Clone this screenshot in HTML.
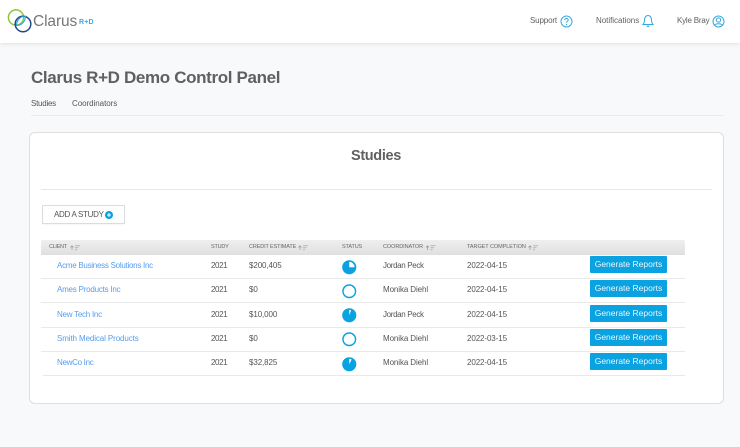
<!DOCTYPE html>
<html>
<head>
<meta charset="utf-8">
<style>
html,body{margin:0;padding:0}
body{width:740px;height:447px;overflow:hidden;background:#f8f9fb;position:relative;font-family:"Liberation Sans",sans-serif;color:#5c5c5c}
.a{position:absolute;white-space:nowrap}
.t{font-size:8px;line-height:12px;letter-spacing:-.1px;color:#555}
.y{letter-spacing:-.4px}
.jp{letter-spacing:-.35px}
.l{font-size:8px;line-height:12px;color:#569dee;left:57px}
.h{font-size:5.5px;line-height:10px;top:242px;color:#666;letter-spacing:-.1px}
.ln{position:absolute;left:41px;width:644px;height:1px;background:#e9e9e9}
.b{position:absolute;left:590px;width:77px;height:17px;background:#0aa2e0;color:#e8f7ff;font-size:8.5px;line-height:16px;text-align:center;border-radius:1px;letter-spacing:0}
svg{position:absolute;overflow:visible}
</style>
</head>
<body>
<div class="a" style="left:0;top:0;width:740px;height:43px;background:#fff;box-shadow:0 1px 4px rgba(0,0,0,.1)"></div>

<svg style="left:6px;top:8px" width="27" height="26" viewBox="0 0 27 26">
<circle cx="10" cy="9.5" r="7.600" fill="none" stroke="#8cc63f" stroke-width="1.500"/>
<circle cx="17" cy="16" r="7.800" fill="none" stroke="#1f4a8c" stroke-width="1.500"/>
<path d="M10.500 17.500C10.500 12 15 8 19.500 8C19.500 13 16 17.500 10.500 17.500Z" fill="none" stroke="#29abe2" stroke-width="1.100"/>
</svg>
<div class="a" style="left:33px;top:12px;font-size:15.500px;line-height:20px;color:#77777a;letter-spacing:-.1px">Clarus</div>
<div class="a" style="left:79px;top:18px;font-size:7px;line-height:10px;color:#3aa9e6;font-weight:bold;letter-spacing:.2px">R+D</div>

<div class="a t" style="left:530px;top:15px;color:#5f5f5f;letter-spacing:-.15px">Support</div>
<svg style="left:560px;top:15px" width="13" height="13" viewBox="0 0 13 13">
<circle cx="6.500" cy="6.500" r="5.500" fill="none" stroke="#33a9e0" stroke-width="1"/>
<path d="M4.800 5.100C4.800 3 8.200 3 8.200 5C8.200 6.200 6.500 6.300 6.500 7.800" fill="none" stroke="#33a9e0" stroke-width="1"/>
<circle cx="6.500" cy="9.600" r=".6" fill="#33a9e0"/>
</svg>
<div class="a t" style="left:596px;top:15px;color:#5f5f5f;letter-spacing:-.03px">Notifications</div>
<svg style="left:642px;top:14px" width="12" height="14" viewBox="0 0 12 14">
<path d="M1 10.500C2.500 9 2.400 7.500 2.600 5.200C2.800 3 4.300 1.500 6 1.500C7.700 1.500 9.200 3 9.400 5.200C9.600 7.500 9.500 9 11 10.500Z" fill="none" stroke="#33a9e0" stroke-width="1"/>
<path d="M4.800 12.300H7.200" stroke="#33a9e0" stroke-width="1.300"/>
</svg>
<div class="a t" style="left:677px;top:15px;color:#5f5f5f;letter-spacing:-.2px">Kyle Bray</div>
<svg style="left:712px;top:15px" width="13" height="13" viewBox="0 0 13 13">
<circle cx="6.500" cy="6.500" r="5.500" fill="none" stroke="#33a9e0" stroke-width="1"/>
<circle cx="6.500" cy="5" r="2.100" fill="none" stroke="#33a9e0" stroke-width="1"/>
<path d="M2.800 10.300C3.500 8.300 9.500 8.300 10.200 10.300" fill="none" stroke="#33a9e0" stroke-width="1"/>
</svg>

<div class="a" style="left:31px;top:67px;font-size:17px;line-height:21px;font-weight:bold;color:#5f6062;letter-spacing:-.35px">Clarus R+D Demo Control Panel</div>
<div class="a t" style="left:31px;top:98px;letter-spacing:-.25px">Studies</div>
<div class="a t" style="left:72px;top:98px;letter-spacing:-.05px">Coordinators</div>
<div class="a" style="left:31px;top:115px;width:693px;height:1px;background:#ececee"></div>

<div class="a" style="left:29px;top:132px;width:693px;height:270px;background:#fff;border:1px solid #dedede;border-radius:6px"></div>
<div class="a" style="left:351px;top:148px;font-size:14.500px;line-height:17px;font-weight:bold;color:#5f6062;letter-spacing:-.35px">Studies</div>
<div class="a" style="left:41px;top:189px;width:671px;height:1px;background:#e8e8e8"></div>

<div class="a" style="left:42px;top:205px;width:81px;height:17px;border:1px solid #dcdcdc;background:#fff;box-shadow:0 1px 1px rgba(0,0,0,.04)"></div>
<div class="a" style="left:54px;top:209px;font-size:8px;line-height:12px;color:#555;letter-spacing:-.3px">ADD A STUDY</div>
<svg style="left:105px;top:211px" width="8" height="8" viewBox="0 0 8 8">
<circle cx="4" cy="4" r="4" fill="#0aa2e0"/><path d="M2 4H6M4 2V6" stroke="#fff" stroke-width="1"/>
</svg>

<div class="a" style="left:41px;top:240px;width:644px;height:15px;background:linear-gradient(#efefef,#dfdfdf);border-radius:2px 2px 0 0"></div>
<div class="a h" style="left:49px;letter-spacing:-.3px">CLIENT</div>
<div class="a h" style="left:211px;letter-spacing:-.2px">STUDY</div>
<div class="a h" style="left:249px;letter-spacing:-.12px">CREDIT ESTIMATE</div>
<div class="a h" style="left:342px;letter-spacing:-.13px">STATUS</div>
<div class="a h" style="left:383px;letter-spacing:-.07px">COORDINATOR</div>
<div class="a h" style="left:467px;letter-spacing:-.05px">TARGET COMPLETION</div>
<svg style="left:0;top:0" width="740" height="447">
<g fill="none" stroke="#999" stroke-width=".7">
<path d="M72 250V246M70.500 247.500L72 245.800L73.500 247.500M75 245.800H80M75 247.800H78.500M75 249.800H77"/>
<path d="M300 250V246M298.500 247.500L300 245.800L301.500 247.500M303 245.800H308M303 247.800H306.500M303 249.800H305"/>
<path d="M427.500 250V246M426 247.500L427.500 245.800L429 247.500M430.500 245.800H435.500M430.500 247.800H434M430.500 249.800H432.500"/>
<path d="M530 250V246M528.500 247.500L530 245.800L531.500 247.500M533 245.800H538M533 247.800H536.500M533 249.800H535"/>
</g>
</svg>

<div class="ln" style="top:278px"></div>
<div class="ln" style="top:302px"></div>
<div class="ln" style="top:327px"></div>
<div class="ln" style="top:351px"></div>
<div class="ln" style="top:375px;left:43px;width:642px"></div>

<div class="a l" style="top:260px;letter-spacing:-.27px">Acme Business Solutions Inc</div>
<div class="a t y" style="left:211px;top:260px">2021</div>
<div class="a t" style="left:249px;top:260px">$200,405</div>
<svg style="left:342px;top:259.500px" width="14.500" height="14.500" viewBox="0 0 15 15"><circle cx="7.500" cy="7.500" r="7.300" fill="#0aa2e0"/><path d="M7.500 7.500V2A5.500 5.500 0 0 1 13 7.500Z" fill="#fff"/></svg>
<div class="a t jp" style="left:383px;top:260px">Jordan Peck</div>
<div class="a t" style="left:467px;top:260px">2022-04-15</div>
<div class="b" style="top:256px">Generate Reports</div>

<div class="a l" style="top:284px;letter-spacing:-.22px">Ames Products Inc</div>
<div class="a t y" style="left:211px;top:284px">2021</div>
<div class="a t" style="left:249px;top:284px">$0</div>
<svg style="left:342px;top:283.500px" width="14.500" height="14.500" viewBox="0 0 15 15"><circle cx="7.500" cy="7.500" r="6.500" fill="none" stroke="#0aa2e0" stroke-width="1.500"/></svg>
<div class="a t" style="left:383px;top:284px">Monika Diehl</div>
<div class="a t" style="left:467px;top:284px">2022-04-15</div>
<div class="b" style="top:280px">Generate Reports</div>

<div class="a l" style="top:309px;letter-spacing:-.25px">New Tech Inc</div>
<div class="a t y" style="left:211px;top:309px">2021</div>
<div class="a t" style="left:249px;top:309px">$10,000</div>
<svg style="left:342px;top:307.500px" width="14.500" height="14.500" viewBox="0 0 15 15"><circle cx="7.500" cy="7.500" r="7.300" fill="#0aa2e0"/><path d="M7.500 7.500V2A5.500 5.500 0 0 1 9.400 2.400Z" fill="#fff"/></svg>
<div class="a t jp" style="left:383px;top:309px">Jordan Peck</div>
<div class="a t" style="left:467px;top:309px">2022-04-15</div>
<div class="b" style="top:305px">Generate Reports</div>

<div class="a l" style="top:333px;letter-spacing:-.11px">Smith Medical Products</div>
<div class="a t y" style="left:211px;top:333px">2021</div>
<div class="a t" style="left:249px;top:333px">$0</div>
<svg style="left:342px;top:332px" width="14.500" height="14.500" viewBox="0 0 15 15"><circle cx="7.500" cy="7.500" r="6.500" fill="none" stroke="#0aa2e0" stroke-width="1.500"/></svg>
<div class="a t" style="left:383px;top:333px">Monika Diehl</div>
<div class="a t" style="left:467px;top:333px">2022-03-15</div>
<div class="b" style="top:329px">Generate Reports</div>

<div class="a l" style="top:357px;letter-spacing:-.3px">NewCo Inc</div>
<div class="a t y" style="left:211px;top:357px">2021</div>
<div class="a t" style="left:249px;top:357px">$32,825</div>
<svg style="left:342px;top:356.500px" width="14.500" height="14.500" viewBox="0 0 15 15"><circle cx="7.500" cy="7.500" r="7.300" fill="#0aa2e0"/><path d="M7.500 7.500V2A5.500 5.500 0 0 1 10 2.600Z" fill="#fff"/></svg>
<div class="a t" style="left:383px;top:357px">Monika Diehl</div>
<div class="a t" style="left:467px;top:357px">2022-04-15</div>
<div class="b" style="top:353px">Generate Reports</div>
</body>
</html>
